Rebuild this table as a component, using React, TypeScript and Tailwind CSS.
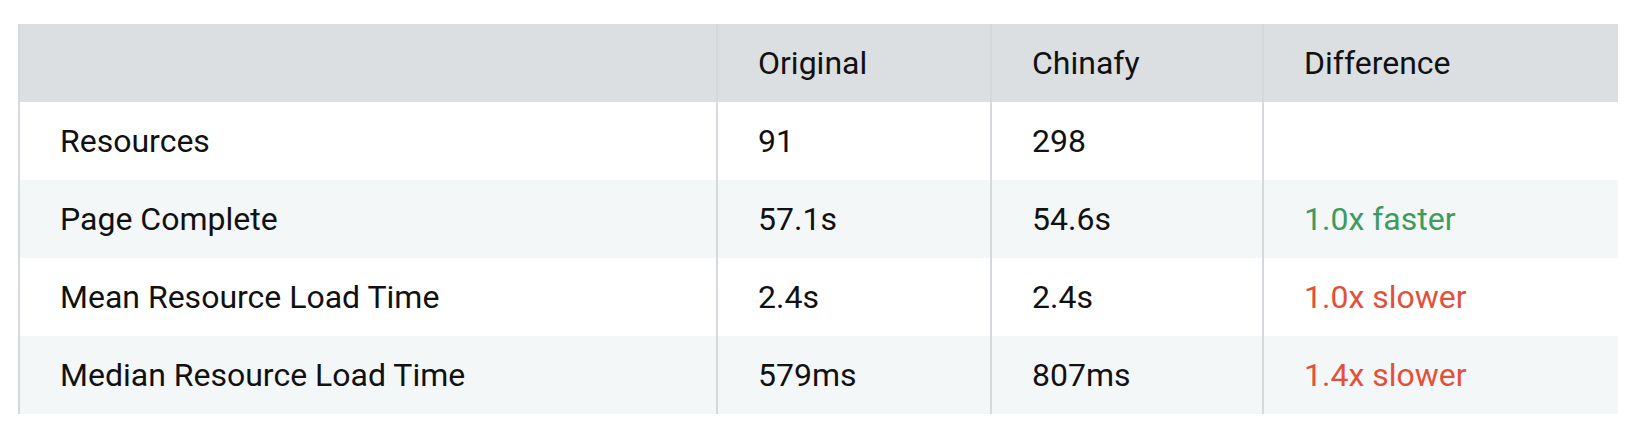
import React from "react";

type Row = { label: string; orig: string; chin: string; diff: string; tone?: "good" | "bad" };

const rows: Row[] = [
  { label: "Resources", orig: "91", chin: "298", diff: "" },
  { label: "Page Complete", orig: "57.1s", chin: "54.6s", diff: "1.0x faster", tone: "good" },
  { label: "Mean Resource Load Time", orig: "2.4s", chin: "2.4s", diff: "1.0x slower", tone: "bad" },
  { label: "Median Resource Load Time", orig: "579ms", chin: "807ms", diff: "1.4x slower", tone: "bad" },
];

const cell = "h-[78px] flex items-center pl-[40px] border-l-2 border-[#d5d9dd]";

export default function App() {
  return (
    <div className="w-[1638px] h-[436px] bg-white pt-[24px] pl-[18px] text-[32px] text-[#111] [font-family:Roboto,'Liberation_Sans',sans-serif]">
      <div className="w-[1600px] grid grid-cols-[698px_274px_272px_356px]">
        <div className={`${cell} bg-[#dcdfe2]`}></div>
        <div className={`${cell} bg-[#dcdfe2]`}>Original</div>
        <div className={`${cell} bg-[#dcdfe2]`}>Chinafy</div>
        <div className={`${cell} bg-[#dcdfe2]`}>Difference</div>
        {rows.map((r, i) => {
          const bg = i % 2 === 1 ? "bg-[#f4f7f8]" : "bg-white";
          const tone =
            r.tone === "good" ? "text-[#3f9a5e]" : r.tone === "bad" ? "text-[#e3503a]" : "";
          return (
            <React.Fragment key={r.label}>
              <div className={`${cell} ${bg}`}>{r.label}</div>
              <div className={`${cell} ${bg}`}>{r.orig}</div>
              <div className={`${cell} ${bg}`}>{r.chin}</div>
              <div className={`${cell} ${bg} ${tone}`}>{r.diff}</div>
            </React.Fragment>
          );
        })}
      </div>
    </div>
  );
}
